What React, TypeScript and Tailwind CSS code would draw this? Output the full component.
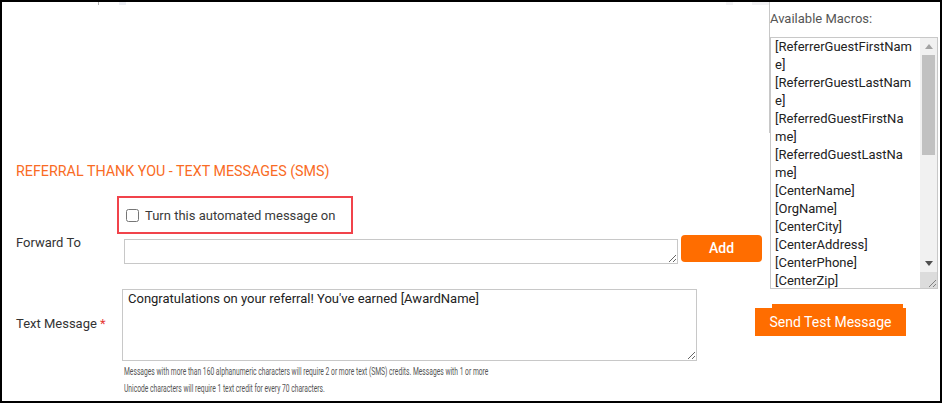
// each macro, split where the reference list wraps it
const macros = [
  ["[ReferrerGuestFirstNam", "e]"],
  ["[ReferrerGuestLastNam", "e]"],
  ["[ReferredGuestFirstNa", "me]"],
  ["[ReferredGuestLastNa", "me]"],
  ["[CenterName]"],
  ["[OrgName]"],
  ["[CenterCity]"],
  ["[CenterAddress]"],
  ["[CenterPhone]"],
  ["[CenterZip]"],
];

function MacroList() {
  return (
    <div className="mt-[8px] w-[168px] h-[252px] border border-[#c8c8c8] flex overflow-hidden bg-white">
      <div className="w-[149px] px-[4px] text-[13px] leading-[18px] text-[#222] whitespace-nowrap">
        {macros.map((lines) => (
          <div key={lines[0]}>
            {lines.map((l) => (
              <div key={l}>{l}</div>
            ))}
          </div>
        ))}
      </div>
      {/* scrollbar */}
      <div className="w-[17px] flex flex-col bg-[#f1f1f1]">
        <div className="h-[17px] flex items-center justify-center">
          <svg width="8" height="5" viewBox="0 0 8 5">
            <path d="M0 5 L4 0 L8 5 Z" fill="#a3a3a3" />
          </svg>
        </div>
        <div className="mx-[2px] h-[100px] bg-[#c1c1c1]" />
        <div className="flex-1" />
        <div className="h-[17px] flex items-center justify-center">
          <svg width="8" height="5" viewBox="0 0 8 5">
            <path d="M0 0 L8 0 L4 5 Z" fill="#505050" />
          </svg>
        </div>
        <div className="h-[16px] bg-[#dcdcdc] flex items-end justify-end">
          <svg width="10" height="10" viewBox="0 0 10 10">
            <path d="M9 2 L2 9 M9 6 L6 9" stroke="#808080" strokeWidth="1" />
          </svg>
        </div>
      </div>
    </div>
  );
}

export default function App() {
  return (
    <div className="w-[942px] h-[403px] border-2 border-black flex bg-white font-['Roboto',sans-serif] overflow-hidden">
      {/* left: form */}
      <div className="w-[767px] flex flex-col pl-[14px]">
        <div className="h-[159px]">
          <div className="flex h-[3px]">
            <div className="ml-[82px] w-px h-[3px] bg-[#b0b0b0]" />
            <div className="ml-[20px] w-[7px] h-[3px] bg-[#eceef4]" />
            <div className="ml-[600px] w-[7px] h-[3px] bg-[#f2f2f4]" />
            <div className="ml-[19px] w-[17px] h-[3px] bg-[#f2f2f4]" />
          </div>
        </div>
        <h2 className="text-[14.3px] leading-5 text-[#f96b24]">
          REFERRAL THANK YOU - TEXT MESSAGES (SMS)
        </h2>
        <div className="mt-[15px] ml-[101px] w-[236px] h-[38px] border-2 border-[#f1434b] flex items-center pl-[7px] gap-[6px]">
          <input type="checkbox" className="w-[13px] h-[13px]" />
          <span className="mt-[2px] text-[13px] leading-[18px] text-[#3a3a3a]">
            Turn this automated message on
          </span>
        </div>
        <div className="flex items-start h-[30px]">
          <label className="w-[108px] text-[13px] leading-[18px] text-[#333]">Forward To</label>
          <textarea className="mt-[5px] w-[554px] h-[25px] border border-[#c8c8c8] px-[5px] py-0 text-[13px] leading-[18px] text-[#222] outline-none" />
          <button className="ml-[3px] mt-[1px] w-[81px] h-[27px] rounded-[4px] bg-[#ff6d00] text-white text-[14px] font-medium">
            Add
          </button>
        </div>
        <div className="mt-[25px] flex items-start">
          <label className="w-[106px] mt-[26px] text-[13px] leading-[18px] text-[#333]">
            Text Message <span className="text-[#e53935]">*</span>
          </label>
          <textarea
            className="w-[575px] h-[72px] border border-[#c8c8c8] px-[5px] py-0 text-[13px] leading-[18px] text-[#222] outline-none"
            defaultValue="Congratulations on your referral! You've earned [AwardName]"
          />
        </div>
        <div className="ml-[108px] mt-[2px] text-[10.5px] leading-[17px] text-[#555]">
          <div className="whitespace-nowrap scale-x-[0.64] origin-left">
            Messages with more than 160 alphanumeric characters will require 2 or more text (SMS) credits. Messages with 1 or more
          </div>
          <div className="whitespace-nowrap scale-x-[0.64] origin-left">
            Unicode characters will require 1 text credit for every 70 characters.
          </div>
        </div>
      </div>

      {/* right: macros */}
      <div className="flex-1 flex items-start">
        <div className="w-px h-[131px] bg-[#c8c8c8]" />
        <div className="flex flex-col">
          <div className="mt-[7px] text-[13px] leading-5 text-[#555]">Available Macros:</div>
          <MacroList />
          <div className="mt-[15px] ml-[2px] w-[131px] h-[4px] bg-[#ff6d00]" />
          <button className="-ml-[15px] w-[151px] h-[28px] bg-[#ff6d00] text-white text-[14px]">
            Send Test Message
          </button>
        </div>
      </div>
    </div>
  );
}
